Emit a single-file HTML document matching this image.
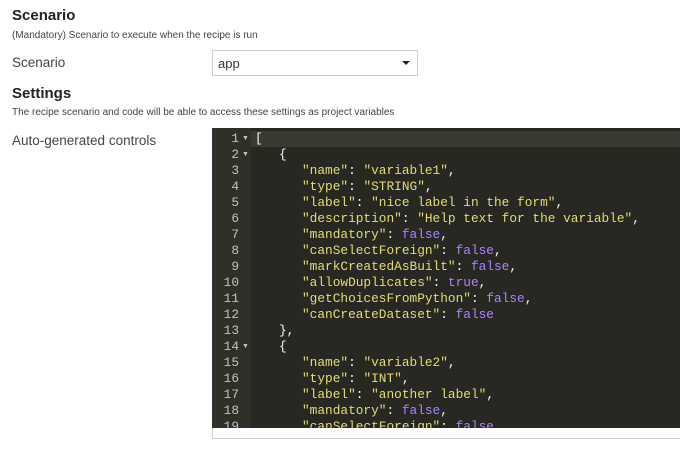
<!DOCTYPE html>
<html><head><style>
body{margin:0;width:680px;height:452px;background:#fff;font-family:"Liberation Sans",sans-serif;color:#333;position:relative;overflow:hidden}
.a{position:absolute;white-space:nowrap}
h{font-weight:bold;font-size:15px;color:#222}
.s{font-size:10px;color:#444}
.l{font-size:13.5px;color:#444}
#ed{position:absolute;left:212px;top:128px;width:468px;height:300px;background:#272822;overflow:hidden}
#gut{position:absolute;left:0;top:0;width:39px;height:300px;background:#2f3129}
.ln{position:absolute;left:0;width:27px;text-align:right;color:#c2c2bf;font-family:"Liberation Mono",monospace;font-size:12.8px;line-height:16px}
.fa{position:absolute;left:30px;color:#c2c2bf;font-size:7px;line-height:16px}
.c{position:absolute;font-family:"Liberation Mono",monospace;font-size:12.8px;line-height:16px;color:#f8f8f2;white-space:pre}
.y{color:#e6db74}.p{color:#ae81ff}
</style></head><body>
<div class="a" style="left:12px;top:7px"><h>Scenario</h></div>
<div class="a s" style="left:12px;top:30px">(Mandatory) Scenario to execute when the recipe is run</div>
<div class="a l" style="left:12px;top:55px">Scenario</div>
<div style="position:absolute;left:212px;top:50px;width:204px;height:24px;border:1px solid #ccc;background:#fff"></div>
<div class="a" style="left:218px;top:56px;font-size:13px;color:#333">app</div>
<div style="position:absolute;left:402px;top:61px;width:0;height:0;border-left:4px solid transparent;border-right:4px solid transparent;border-top:4px solid #222"></div>
<div class="a" style="left:12px;top:85px"><h>Settings</h></div>
<div class="a s" style="left:12px;top:107px">The recipe scenario and code will be able to access these settings as project variables</div>
<div class="a l" style="left:12px;top:133px">Auto-generated controls</div>
<div style="position:absolute;left:212px;top:428px;width:468px;height:11px;border-left:1px solid #ccc;border-bottom:1px solid #ccc;box-sizing:border-box"></div>
<div id="ed">
<div id="gut"></div>
<div style="position:absolute;left:39px;top:3px;width:429px;height:16px;background:#3a3a33"></div>
<div id="lines"></div>
</div>
<script>
var L=[[0,'[',''],[1,'{',''],[2,'"name"','y',': ','','"variable1"','y',',',''],[2,'"type"','y',': ','','"STRING"','y',',',''],[2,'"label"','y',': ','','"nice label in the form"','y',',',''],[2,'"description"','y',': ','','"Help text for the variable"','y',',',''],[2,'"mandatory"','y',': ','','false','p',',',''],[2,'"canSelectForeign"','y',': ','','false','p',',',''],[2,'"markCreatedAsBuilt"','y',': ','','false','p',',',''],[2,'"allowDuplicates"','y',': ','','true','p',',',''],[2,'"getChoicesFromPython"','y',': ','','false','p',',',''],[2,'"canCreateDataset"','y',': ','','false','p'],[1,'},',''],[1,'{',''],[2,'"name"','y',': ','','"variable2"','y',',',''],[2,'"type"','y',': ','','"INT"','y',',',''],[2,'"label"','y',': ','','"another label"','y',',',''],[2,'"mandatory"','y',': ','','false','p',',',''],[2,'"canSelectForeign"','y',': ','','false','p']];
var h='',X=[43,67,90];
L.forEach(function(r,i){var t=3+i*16;h+='<div class="ln" style="top:'+t+'px">'+(i+1)+'</div>';
if(i==0||i==1||i==13)h+='<div class="fa" style="top:'+t+'px">&#9660;</div>';
var s='';for(var k=1;k<r.length;k+=2)s+='<span class="'+r[k+1]+'">'+r[k]+'</span>';
h+='<div class="c" style="left:'+X[r[0]]+'px;top:'+t+'px">'+s+'</div>';});
document.getElementById('lines').innerHTML=h;
</script>
</body></html>
